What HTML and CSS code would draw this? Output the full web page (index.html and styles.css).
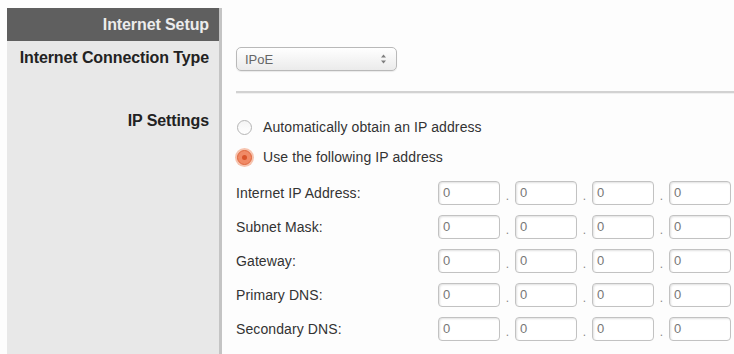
FILE: index.html
```html
<!DOCTYPE html>
<html>
<head>
<meta charset="utf-8">
<link rel="stylesheet" href="styles.css">
</head>
<body>
<div class="page">
  <aside class="side">
    <div class="side-head">Internet Setup</div>
    <div class="side-label first">Internet Connection Type</div>
    <div class="side-label second">IP Settings</div>
  </aside>
  <main class="main">
    <div class="select">
      <span class="select-text">IPoE</span>
      <svg class="select-arrows" width="7" height="14" viewBox="0 0 7 14">
        <path d="M1 5.5 L3.5 2.5 L6 5.5 Z" fill="#7e7e7e"/>
        <path d="M1 8.5 L3.5 11.5 L6 8.5 Z" fill="#7e7e7e"/>
      </svg>
    </div>
    <div class="rule"></div>
    <div class="radio-row">
      <span class="radio"></span>
      <span class="radio-text">Automatically obtain an IP address</span>
    </div>
    <div class="radio-row">
      <span class="radio checked"><span class="dot"></span></span>
      <span class="radio-text">Use the following IP address</span>
    </div>
    <div class="ip-list">
      <div class="ip-row">
        <span class="ip-label">Internet IP Address:</span>
        <span class="ip-box">0</span><span class="sep">.</span><span class="ip-box">0</span><span class="sep">.</span><span class="ip-box">0</span><span class="sep">.</span><span class="ip-box">0</span>
      </div>
      <div class="ip-row">
        <span class="ip-label">Subnet Mask:</span>
        <span class="ip-box">0</span><span class="sep">.</span><span class="ip-box">0</span><span class="sep">.</span><span class="ip-box">0</span><span class="sep">.</span><span class="ip-box">0</span>
      </div>
      <div class="ip-row">
        <span class="ip-label">Gateway:</span>
        <span class="ip-box">0</span><span class="sep">.</span><span class="ip-box">0</span><span class="sep">.</span><span class="ip-box">0</span><span class="sep">.</span><span class="ip-box">0</span>
      </div>
      <div class="ip-row">
        <span class="ip-label">Primary DNS:</span>
        <span class="ip-box">0</span><span class="sep">.</span><span class="ip-box">0</span><span class="sep">.</span><span class="ip-box">0</span><span class="sep">.</span><span class="ip-box">0</span>
      </div>
      <div class="ip-row">
        <span class="ip-label">Secondary DNS:</span>
        <span class="ip-box">0</span><span class="sep">.</span><span class="ip-box">0</span><span class="sep">.</span><span class="ip-box">0</span><span class="sep">.</span><span class="ip-box">0</span>
      </div>
    </div>
  </main>
</div>
</body>
</html>
```
FILE: styles.css
```css
html, body {
  margin: 0;
  padding: 0;
  background: #fdfdfd;
  font-family: "Liberation Sans", Arial, sans-serif;
  overflow: hidden;
}
.page {
  display: flex;
  padding: 8px 0 0 7px;
  height: 346px;
}
.side {
  width: 212px;
  background: #e8e8e8;
  border-right: 3px solid #c4c4c4;
  display: flex;
  flex-direction: column;
  flex-shrink: 0;
}
.side-head {
  height: 33px;
  line-height: 33px;
  background: #5f5f5f;
  color: #ececec;
  font-weight: bold;
  font-size: 16px;
  letter-spacing: -0.1px;
  text-align: right;
  padding-right: 10px;
}
.side-label {
  font-weight: bold;
  font-size: 16px;
  letter-spacing: -0.1px;
  color: #222;
  text-align: right;
  padding-right: 10px;
  line-height: 18px;
}
.side-label.first {
  margin-top: 8px;
}
.side-label.second {
  margin-top: 45px;
}
.main {
  flex: 1;
  padding: 39px 0 0 14px;
  display: flex;
  flex-direction: column;
}
.select {
  width: 142px;
  height: 22px;
  border: 1px solid #b9b9b9;
  border-radius: 5px;
  background: linear-gradient(#ffffff, #ebebeb);
  display: flex;
  align-items: center;
  justify-content: space-between;
  padding: 0 9px 0 8px;
  box-sizing: content-box;
  box-shadow: 0 1px 1px rgba(0,0,0,0.08);
}
.select-text {
  font-size: 13px;
  color: #666;
}
.select-arrows {
  display: block;
}
.rule {
  margin-top: 20px;
  height: 2px;
  background: #d2d2d2;
  border-bottom: 1px solid #f0f0f0;
  margin-bottom: 18px;
}
.radio-row {
  height: 30px;
  display: flex;
  align-items: center;
}
.radio {
  width: 13px;
  height: 13px;
  border: 1px solid #b5b5b5;
  border-radius: 50%;
  background: linear-gradient(#f4f4f4, #ffffff);
  margin-left: 1px;
  margin-right: 11px;
  box-sizing: content-box;
  display: flex;
  align-items: center;
  justify-content: center;
  flex-shrink: 0;
}
.radio.checked {
  border: 1px solid #e0673e;
  background: #f08a66;
  box-shadow: 0 0 0 2px #f6c3ae;
}
.radio .dot {
  width: 5px;
  height: 5px;
  border-radius: 50%;
  background: #d9532a;
}
.radio-text {
  font-size: 14px;
  color: #333;
  letter-spacing: 0.1px;
}
.ip-list {
  margin-top: 4px;
  display: flex;
  flex-direction: column;
}
.ip-row {
  height: 34px;
  display: flex;
  align-items: center;
}
.ip-label {
  width: 202px;
  font-size: 14px;
  color: #333;
  letter-spacing: 0.1px;
}
.ip-box {
  width: 56px;
  height: 22px;
  line-height: 22px;
  border: 1px solid #c2c2c2;
  border-radius: 4px;
  padding-left: 4px;
  background: #fff;
  font-size: 13px;
  color: #777;
  box-shadow: inset 1px 1px 2px rgba(0,0,0,0.12);
  box-sizing: content-box;
}
.sep {
  width: 15px;
  text-align: center;
  font-size: 12px;
  color: #888;
  padding-top: 6px;
}
```
